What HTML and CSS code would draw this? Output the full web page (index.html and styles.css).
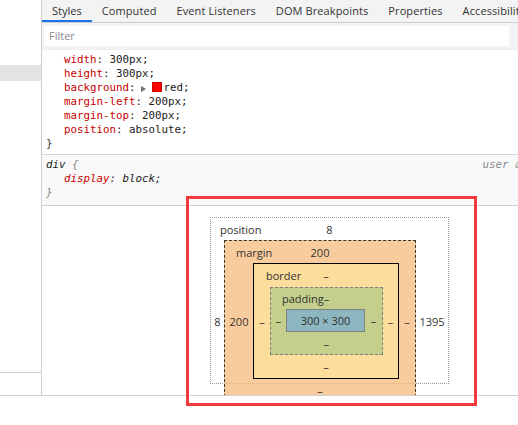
FILE: index.html
```html
<!DOCTYPE html>
<html>
<head>
<meta charset="utf-8">
<link rel="stylesheet" href="styles.css">
</head>
<body>
<div class="devtools">
  <aside class="sidebar">
    <div class="sel-row"></div>
    <div class="side-fill"></div>
    <div class="side-foot"></div>
  </aside>
  <main class="main">
    <nav class="tabs">
      <span class="tab active">Styles</span>
      <span class="tab">Computed</span>
      <span class="tab">Event Listeners</span>
      <span class="tab">DOM Breakpoints</span>
      <span class="tab">Properties</span>
      <span class="tab">Accessibility</span>
    </nav>
    <div class="filter-bar">
      <div class="filter-input">Filter</div>
    </div>
    <section class="rule">
      <div class="decl"><span class="pn">width</span>: 300px;</div>
      <div class="decl"><span class="pn">height</span>: 300px;</div>
      <div class="decl"><span class="pn">background</span>:<span class="tri"></span><span class="swatch"></span>red;</div>
      <div class="decl"><span class="pn">margin-left</span>: 200px;</div>
      <div class="decl"><span class="pn">margin-top</span>: 200px;</div>
      <div class="decl"><span class="pn">position</span>: absolute;</div>
      <div class="brace">}</div>
    </section>
    <section class="rule ua">
      <div class="sel-line"><span class="sel">div <span class="punct">{</span></span><span class="src">user agent stylesheet</span></div>
      <div class="decl it"><span class="pn">display</span>: block;</div>
      <div class="brace punct">}</div>
    </section>
    <section class="boxmodel">
      <div class="bm pos">
        <div class="t"><span class="lbl">position</span><span>8</span><span></span></div>
        <div class="s">8</div>
        <div class="bm mrg">
          <div class="t"><span class="lbl">margin</span><span>200</span><span></span></div>
          <div class="s">200</div>
          <div class="bm brd">
            <div class="t"><span class="lbl">border</span><span>–</span><span></span></div>
            <div class="s">–</div>
            <div class="bm pad">
              <div class="t"><span class="lbl">padding</span><span>–</span><span></span></div>
              <div class="s">–</div>
              <div class="cnt">300 × 300</div>
              <div class="s">–</div>
              <div class="b">–</div>
            </div>
            <div class="s">–</div>
            <div class="b">–</div>
          </div>
          <div class="s">–</div>
          <div class="b">–</div>
        </div>
        <div class="s">1395</div>
        <div class="b"></div>
      </div>
    </section>
  </main>
</div>
<div class="highlight"></div>
</body>
</html>
```
FILE: styles.css
```css
html, body {
  margin: 0;
  padding: 0;
}
body {
  width: 518px;
  height: 425px;
  background: #fff;
  font-family: "Open Sans", "Noto Sans", sans-serif;
  font-size: 11px;
  color: #333;
  position: relative;
  overflow: hidden;
}
.devtools {
  display: flex;
  height: 396px;
  box-sizing: border-box;
  border-bottom: 1px solid #d0d0d0;
}
.sidebar {
  width: 42px;
  box-sizing: border-box;
  border-right: 1px solid #cfcfcf;
  display: flex;
  flex-direction: column;
  flex: none;
}
.sel-row {
  margin-top: 65px;
  height: 16px;
  background: #e3e3e3;
}
.side-fill { flex: 1; }
.side-foot {
  height: 22px;
  border-top: 1px solid #d0d0d0;
}
.main {
  flex: 1;
  min-width: 0;
  display: flex;
  flex-direction: column;
  overflow: hidden;
}
.tabs {
  height: 23px;
  box-sizing: border-box;
  background: #f3f3f3;
  border-bottom: 1px solid #cdcdcd;
  display: flex;
  white-space: nowrap;
  flex: none;
}
.tab {
  padding: 0 10px;
  line-height: 21px;
  color: #333;
  flex: none;
  letter-spacing: 0.1px;
}
.tab.active {
  box-shadow: inset 0 -2px 0 #1a73e8;
  letter-spacing: 0;
}
.filter-bar {
  flex: none;
  background: #f3f3f3;
  padding: 3px 9px 3px 2px;
  border-bottom: 1px solid #ececec;
}
.filter-input {
  height: 20px;
  background: #fff;
  padding-left: 5px;
  line-height: 20px;
  color: #8a8a8a;
}
.rule {
  flex: none;
  padding: 3px 0 3px 4px;
  font-family: "DejaVu Sans Mono", "Liberation Mono", monospace;
  font-size: 10.8px;
  line-height: 14px;
  color: #222;
  border-bottom: 1px solid #d6d6d6;
  white-space: nowrap;
}
.decl {
  padding-left: 18px;
}
.pn { color: #c80000; }
.tri {
  display: inline-block;
  width: 0;
  height: 0;
  border-left: 5px solid #6e6e6e;
  border-top: 3.5px solid transparent;
  border-bottom: 3.5px solid transparent;
  margin-left: 5px;
  vertical-align: -1px;
}
.swatch {
  display: inline-block;
  width: 10px;
  height: 10px;
  background: #f00;
  box-shadow: inset 0 0 0 1px rgba(120, 0, 0, 0.35);
  margin: 0 2px 0 6px;
  vertical-align: -1px;
}
.brace { color: #333; }
.ua {
  background: #f9f9f9;
  padding-bottom: 5px;
  border-bottom-color: #cfcfcf;
  font-style: italic;
}
.sel-line {
  display: flex;
}
.sel { color: #222; }
.punct { color: #888; }
.src {
  margin-left: auto;
  margin-right: -101px;
  color: #888;
}
.boxmodel {
  flex: 1;
  min-height: 0;
  overflow: hidden;
  padding: 11px 0 0 168px;
}
.bm {
  display: grid;
  box-sizing: border-box;
  position: relative;
  font-family: "Open Sans", "Noto Sans", sans-serif;
  font-size: 11px;
  color: #333;
}
.bm > .t {
  grid-column: 1 / -1;
  display: grid;
  grid-template-columns: 1fr auto 1fr;
  align-items: center;
  white-space: nowrap;
}
.bm > .t .lbl { justify-self: start; }
.bm > .s, .bm > .b {
  display: flex;
  align-items: center;
  justify-content: center;
}
.bm > .b { grid-column: 1 / -1; }
.pos {
  width: 239px;
  height: 167px;
  border: 1px dotted #9a9a9a;
  grid-template-columns: 13px 192px 32px;
  grid-template-rows: 22px 162px 0;
}
.pos > .t .lbl { padding-left: 9px; }
.mrg {
  background: #f9cc9d;
  border: 1px dashed #333;
  grid-template-columns: 28px 146px 16px;
  grid-template-rows: 22px 116px 22px;
}
.mrg::after {
  content: "";
  position: absolute;
  left: 0;
  right: 0;
  top: 142px;
  border-top: 1px dotted #e2ad7c;
}
.mrg > .t .lbl { padding-left: 11px; }
.brd {
  background: #fddd9b;
  border: 1px solid #000;
  grid-template-columns: 16px 113px 15px;
  grid-template-rows: 23px 68px 23px;
}
.brd > .t .lbl { padding-left: 12px; }
.pad {
  background: #c3cf8a;
  border: 1px dashed #808080;
  grid-template-columns: 15px 79px 17px;
  grid-template-rows: 21px 23px 22px;
}
.pad > .t .lbl { padding-left: 11px; }
.cnt {
  box-sizing: border-box;
  background: #8cb6c0;
  border: 1px solid #808080;
  display: flex;
  align-items: center;
  justify-content: center;
  white-space: nowrap;
  color: #333;
}
.highlight {
  position: absolute;
  left: 186px;
  top: 196px;
  width: 291px;
  height: 210px;
  box-sizing: border-box;
  border: 3px solid #f33a3a;
}
```
